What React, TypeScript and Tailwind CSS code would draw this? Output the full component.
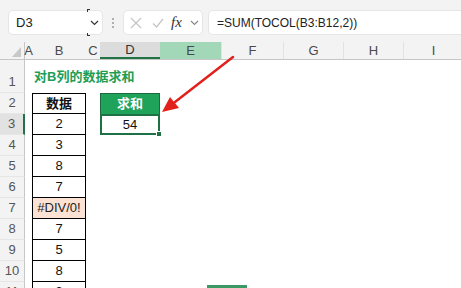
import { ReactNode } from "react";

const font = { fontFamily: '"Liberation Sans", "Noto Sans CJK SC", sans-serif' };

// column widths: row header, A..I
const colW = ["w-[7px]", "w-[54px]", "w-[14px]", "w-[60px]", "w-[61px]", "w-[62px]", "w-[60px]", "w-[60px]", "w-[60px]"];
const letters = ["A", "B", "C", "D", "E", "F", "G", "H", "I"];

const bValues: Record<number, string> = {
    2: "数据", 3: "2", 4: "3", 5: "8", 6: "7", 7: "#DIV/0!", 8: "7", 9: "5", 10: "8", 11: "9",
};

function Chevron({ className }: { className?: string }) {
    return (
        <svg className={className} width="9" height="6" viewBox="0 0 9 6" fill="none">
            <polyline points="1,1 4.5,4.5 8,1" stroke="currentColor" strokeWidth="1.2" />
        </svg>
    );
}

function Toolbar() {
    return (
        <div className="flex h-[42px] bg-[#f3f3f3] pl-[8px] pt-[10px]">
            <div className="flex h-[25px] w-[95px] items-center rounded-[5px] border border-[#e6e6e6] bg-white pl-[7px]">
                <span className="text-[13px] text-[#222]">D3</span>
                <div className="relative ml-auto flex h-[25px] w-[15px] items-center justify-center text-[#333]">
                    <Chevron />
                    <span className="absolute -top-px left-0 h-[3px] w-[3px] border-l border-t border-[#333]" />
                    <span className="absolute -bottom-px left-0 h-[3px] w-[3px] border-b border-l border-[#333]" />
                </div>
            </div>
            <div className="flex h-[25px] w-[20px] flex-col items-center justify-center gap-[2px]">
                <span className="h-[2px] w-[2px] rounded-full bg-[#999]" />
                <span className="h-[2px] w-[2px] rounded-full bg-[#999]" />
                <span className="h-[2px] w-[2px] rounded-full bg-[#999]" />
            </div>
            <div className="flex h-[25px] w-[80px] items-center rounded-[5px] border border-[#e6e6e6] bg-white pl-[6px]">
                <svg width="12" height="12" viewBox="0 0 12 12" fill="none">
                    <path d="M1 1 L11 11 M11 1 L1 11" stroke="#c4c4c4" strokeWidth="1.2" />
                </svg>
                <svg className="ml-[10px]" width="12" height="12" viewBox="0 0 12 12" fill="none">
                    <polyline points="1,6.5 4.5,10 11,2" stroke="#c4c4c4" strokeWidth="1.2" />
                </svg>
                <span className="ml-[7px] text-[15px] italic text-[#333]" style={{ fontFamily: '"Liberation Serif", serif' }}>fx</span>
                <Chevron className="ml-[8px] text-[#888]" />
            </div>
            <div className="ml-[5px] flex h-[25px] flex-1 items-center rounded-l-[5px] border border-r-0 border-[#e6e6e6] bg-white pl-[8px]">
                <span className="text-[12px] text-[#222]">=SUM(TOCOL(B3:B12,2))</span>
            </div>
        </div>
    );
}

function HeaderRow() {
    return (
        <div className="flex h-[18px] border-b border-[#c6c6c6] bg-[#f3f3f3]">
            <div className="flex w-[25px] shrink-0 items-end justify-end border-r border-[#c6c6c6] pb-[2px] pr-[3px]">
                <svg width="9" height="10" viewBox="0 0 9 10">
                    <polygon points="9,0 9,10 0,10" fill="#c8c8c8" />
                </svg>
            </div>
            {letters.map((l, i) => {
                let cls = "flex shrink-0 items-center justify-center text-[13px] text-[#4a4a4a] " + colW[i];
                if (l === "D") cls += " bg-[#dcdcdc] border-b-2 border-[#217346] text-[#333]";
                else if (l === "E") cls += " bg-[#a2d7b7]";
                else if (i > 4) cls += " border-l border-[#e2e2e2]";
                return (
                    <div key={l} className={cls}>
                        <span className="whitespace-nowrap">{l}</span>
                    </div>
                );
            })}
        </div>
    );
}

function Row({ r }: { r: number }) {
    const tall = r === 1;
    const selected = r === 3;

    let head = "flex w-[25px] shrink-0 justify-center text-[13px] text-[#555] border-b border-[#e6e6e6] ";
    head += tall ? "items-end pb-[1px] " : "items-center ";
    head += selected ? "bg-[#e2e2e2] border-r-2 border-r-[#217346]" : "bg-[#f3f3f3] border-r border-r-[#c6c6c6]";

    let bCell: ReactNode = <div className={"shrink-0 " + colW[1]} />;
    if (r === 1) {
        bCell = (
            <div className={"flex shrink-0 items-center whitespace-nowrap pl-[2px] pt-[1px] text-[13px] font-bold text-[#1e9e55] " + colW[1]}>
                对B列的数据求和
            </div>
        );
    } else {
        let cls = "flex shrink-0 items-center justify-center border-x border-b border-black text-[13px] text-[#111] " + colW[1];
        if (r === 2) cls += " border-t font-bold";
        if (r === 7) cls += " bg-[#fbe2d5] text-[#222]";
        bCell = <div className={cls}>{bValues[r]}</div>;
    }

    let dCell: ReactNode = <div className={"shrink-0 " + colW[3]} />;
    if (r === 2) {
        dCell = (
            <div className={"flex shrink-0 items-center justify-center border border-b-0 border-[#1c6b3f] bg-[#1fa35a] text-[13px] font-bold text-white " + colW[3]}>
                求和
            </div>
        );
    } else if (r === 3) {
        dCell = (
            <div className={"relative flex shrink-0 items-center justify-center border-2 border-[#1e7145] text-[13px] text-[#111] " + colW[3]}>
                54
                <span className="absolute -bottom-[4px] -right-[4px] h-[6px] w-[6px] border border-white bg-[#1e7145]" />
            </div>
        );
    }

    return (
        <div className={tall ? "flex h-[33px]" : "flex h-[21px]"}>
            <div className={head}>{r}</div>
            <div className={"shrink-0 " + colW[0]} />
            {bCell}
            <div className={"shrink-0 " + colW[2]} />
            {dCell}
            {colW.slice(4).map((w, i) => (
                <div key={i} className={"shrink-0 " + w} />
            ))}
        </div>
    );
}

export default function App() {
    const rows = [1, 2, 3, 4, 5, 6, 7, 8, 9, 10, 11];
    return (
        <div className="relative h-[288px] w-[461px] overflow-hidden bg-white" style={font}>
            <Toolbar />
            <HeaderRow />
            {rows.map((r) => (
                <Row key={r} r={r} />
            ))}

            {/* red arrow pointing at D3 */}
            <svg className="pointer-events-none absolute left-0 top-0" width="461" height="288">
                <line x1="233" y1="57" x2="175" y2="102" stroke="#e3211c" strokeWidth="2.5" strokeLinecap="round" />
                <polygon points="162,112 170,97 179,108" fill="#e3211c" />
            </svg>

            <div className="absolute left-[207px] top-[285px] h-[3px] w-[40px] bg-[#3b9a63]" />
        </div>
    );
}
